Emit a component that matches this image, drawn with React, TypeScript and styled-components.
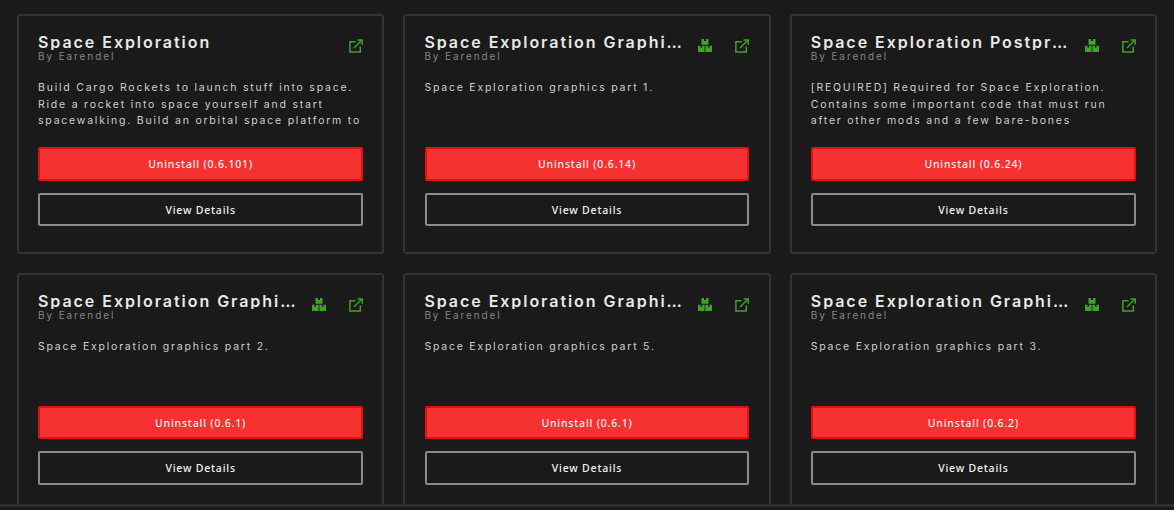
import * as React from 'react';
import styled, { createGlobalStyle } from 'styled-components';

const GlobalStyle = createGlobalStyle`
  html, body {
    margin: 0;
    padding: 0;
    background: #1a1a1a;
    overflow: hidden;
  }
`;

const Page = styled.div`
  height: 510px;
  display: flex;
  flex-direction: column;
  overflow: hidden;
`;

const Scroller = styled.div`
  height: 504px;
  flex: none;
  overflow: hidden;
  box-sizing: border-box;
  padding: 14px 17px 0;
`;

const Footer = styled.div`
  flex: 1;
  border-top: 3px solid #2b2b2b;
`;

const Grid = styled.div`
  display: grid;
  grid-template-columns: repeat(3, minmax(0, 1fr));
  gap: 19.2px;
`;

const Card = styled.div`
  box-sizing: border-box;
  height: 239.5px;
  border: 2px solid #333;
  border-radius: 3px;
  padding: 18px 19.3px 0;
  display: flex;
  flex-direction: column;
`;

const Header = styled.div`
  display: flex;
  align-items: flex-start;
  height: 31px;
`;

const TitleBox = styled.div`
  flex: 1;
  min-width: 0;
`;

const Title = styled.div`
  width: calc(100% + 6px);
  margin-left: -0.3px;
  font-family: 'Inter', sans-serif;
  font-weight: 600;
  font-size: 16px;
  line-height: 17px;
  height: 16px;
  letter-spacing: 1.95px;
  color: #e8e8e8;
  white-space: nowrap;
  overflow: hidden;
  text-overflow: ellipsis;
`;

const Author = styled.div`
  margin-top: 1px;
  margin-left: -0.3px;
  font-family: 'Inter', sans-serif;
  font-size: 10px;
  line-height: 11px;
  letter-spacing: 1.9px;
  color: #858585;
`;

const BoxSlot = styled.div`
  flex: none;
  width: 15px;
  margin-left: 20px;
  margin-top: 5px;
  color: #3fa32a;
`;

const LinkSlot = styled.div`
  flex: none;
  width: 14px;
  margin-left: 22px;
  margin-top: 5px;
  color: #3fa32a;
`;

const Description = styled.div`
  margin-top: 15px;
  margin-left: -0.3px;
  height: 50px;
  overflow: hidden;
  font-family: 'Inter', sans-serif;
  font-size: 10.5px;
  line-height: 16.5px;
  letter-spacing: 1.78px;
  color: #cfcfcf;
`;

const Button = styled.div<{ $danger?: boolean }>`
  box-sizing: border-box;
  height: 33.4px;
  padding-top: 0.6px;
  display: flex;
  align-items: center;
  justify-content: center;
  border-radius: 2px;
  border: 2px solid ${(p) => (p.$danger ? '#e01010' : '#8a8a8a')};
  background: ${(p) => (p.$danger ? '#f53131' : 'transparent')};
  font-family: 'Noto Sans', sans-serif;
  font-weight: 500;
  font-size: 10.5px;
  letter-spacing: 0.8px;
  color: #f2f2f2;
`;

const Actions = styled.div`
  margin-top: 17.3px;
  display: flex;
  flex-direction: column;
  gap: 12px;
`;

const BoxesIcon = () => (
  <svg viewBox="0 0 14 13" width="14" height="13" fill="currentColor" style={{ display: 'block' }}>
    <path d="M3.500 0H6v2h2V0h2.500v5.700h-7z" />
    <path d="M0 6.700h2.500v2h1.500v-2h2.600V13H0z" />
    <path d="M7.400 6.700H10v2h1.500v-2H14V13H7.400z" />
  </svg>
);

const LinkIcon = () => (
  <svg viewBox="0 0 14 14" width="14" height="14" fill="none" stroke="currentColor" strokeWidth="1.5" style={{ display: 'block' }}>
    <path d="M6.500 2.700H.9v10.400h10.400V7.500" />
    <path d="M5 9l7.500-7.500" />
    <path d="M8.500 1.100h4.700v4.700" />
  </svg>
);

interface IMod {
  title: string;
  description: string;
  version: string;
  dependency?: boolean;
}

const MODS: IMod[] = [
  {
    title: 'Space Exploration',
    description:
      'Build Cargo Rockets to launch stuff into space. Ride a rocket into space yourself and start spacewalking. Build an orbital space platform to',
    version: '0.6.101',
  },
  { title: 'Space Exploration Graphics', description: 'Space Exploration graphics part 1.', version: '0.6.14', dependency: true },
  {
    title: 'Space Exploration Postprocess',
    description:
      '[REQUIRED] Required for Space Exploration. Contains some important code that must run after other mods and a few bare-bones',
    version: '0.6.24',
    dependency: true,
  },
  { title: 'Space Exploration Graphics 2', description: 'Space Exploration graphics part 2.', version: '0.6.1', dependency: true },
  { title: 'Space Exploration Graphics 5', description: 'Space Exploration graphics part 5.', version: '0.6.1', dependency: true },
  { title: 'Space Exploration Graphics 3', description: 'Space Exploration graphics part 3.', version: '0.6.2', dependency: true },
];

const App = () => {
  return (
    <Page>
      <GlobalStyle />
      <Scroller>
        <Grid>
          {MODS.map((mod) => (
            <Card key={mod.title}>
              <Header>
                <TitleBox>
                  <Title>{mod.title}</Title>
                  <Author>By Earendel</Author>
                </TitleBox>
                {mod.dependency && (
                  <BoxSlot>
                    <BoxesIcon />
                  </BoxSlot>
                )}
                <LinkSlot>
                  <LinkIcon />
                </LinkSlot>
              </Header>
              <Description>{mod.description}</Description>
              <Actions>
                <Button $danger>Uninstall ({mod.version})</Button>
                <Button>View Details</Button>
              </Actions>
            </Card>
          ))}
        </Grid>
      </Scroller>
      <Footer />
    </Page>
  );
};

export default App;
